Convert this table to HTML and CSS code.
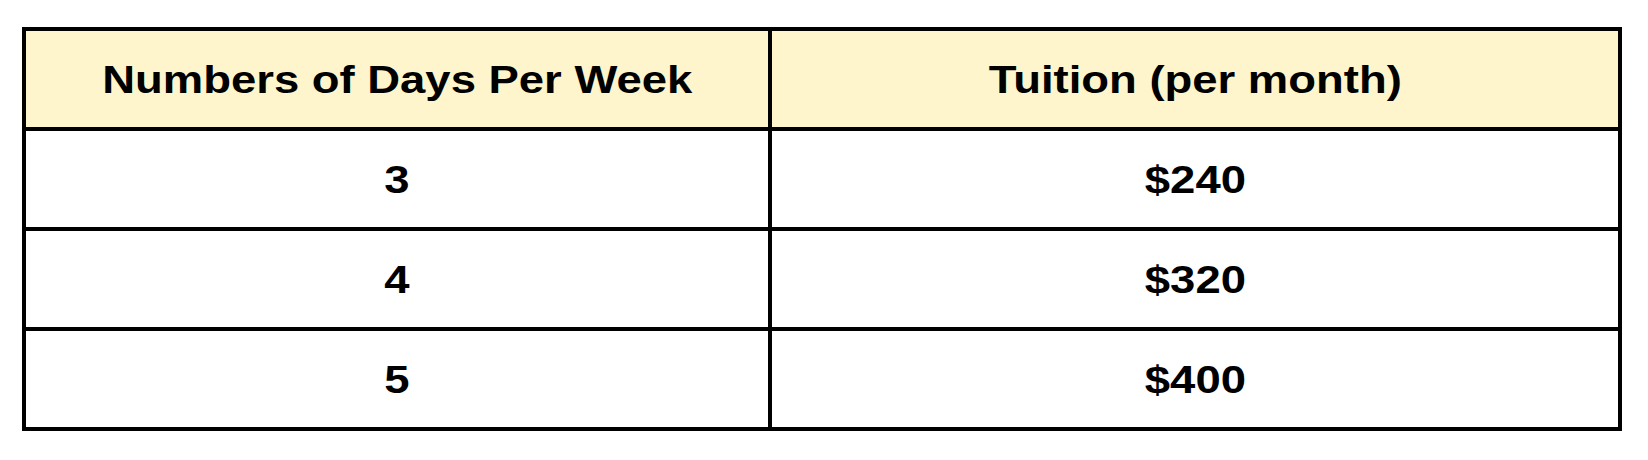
FILE: index.html
```html
<!DOCTYPE html>
<html>
<head>
<meta charset="utf-8">
<link rel="stylesheet" href="styles.css">
</head>
<body>
<div class="grid">
  <div class="cell head"><span class="txt">Numbers of Days Per Week</span></div>
  <div class="cell head"><span class="txt">Tuition (per month)</span></div>
  <div class="cell"><span class="txt">3</span></div>
  <div class="cell"><span class="txt">$240</span></div>
  <div class="cell"><span class="txt">4</span></div>
  <div class="cell"><span class="txt">$320</span></div>
  <div class="cell"><span class="txt">5</span></div>
  <div class="cell"><span class="txt">$400</span></div>
</div>
</body>
</html>
```
FILE: styles.css
```css
html, body {
  margin: 0;
  background: #ffffff;
}
body {
  padding: 27px 0 0 22px;
}
.grid {
  display: grid;
  grid-template-columns: 742px 846px;
  grid-auto-rows: 96px;
  gap: 4px;
  padding: 4px;
  background: #000000;
  width: max-content;
}
.cell {
  background: #ffffff;
  display: flex;
  align-items: center;
  justify-content: center;
  padding-top: 2px;
  font-family: "Liberation Sans", Arial, sans-serif;
  font-weight: bold;
  font-size: 39px;
  color: #000000;
}
.head {
  background: #fef5cc;
}
.txt {
  display: inline-block;
  transform: scaleX(1.165);
  white-space: nowrap;
}
```
